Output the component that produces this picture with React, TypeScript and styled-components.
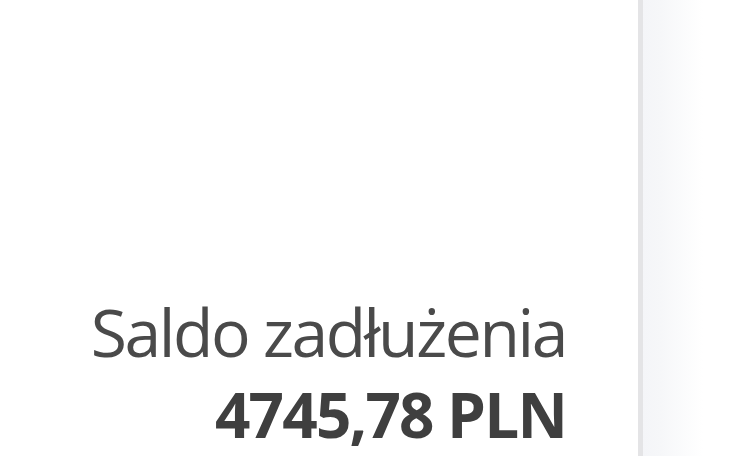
import styled, { createGlobalStyle } from 'styled-components';

const GlobalStyle = createGlobalStyle`
  html, body {
    margin: 0;
    padding: 0;
    background: #ffffff;
  }
  body {
    font-family: 'Open Sans', 'Noto Sans', sans-serif;
  }
`;

const Page = styled.div`
  display: flex;
  height: 456px;
  width: 730px;
  overflow: hidden;
`;

const MainPanel = styled.main`
  flex: 0 0 638px;
  display: flex;
  flex-direction: column;
  justify-content: flex-end;
  align-items: flex-end;
  padding: 0 72px 1px 0;
  box-sizing: border-box;
  background: #ffffff;
`;

const SidePanel = styled.aside`
  flex: 1;
  border-left: 5px solid #e4e4e6;
  background: linear-gradient(to right, #f4f5f8 0px, #f6f7f9 18px, #ffffff 60px);
`;

const BalanceLabel = styled.div`
  font-size: 66px;
  line-height: 81px;
  font-weight: 400;
  letter-spacing: -2.4px;
  color: #4a4a4a;
  white-space: nowrap;
`;

const BalanceAmount = styled.div<{ $bold?: boolean }>`
  margin-top: 2px;
  font-size: 62px;
  line-height: 81px;
  font-weight: ${({ $bold }) => ($bold ? 700 : 400)};
  letter-spacing: -1.8px;
  color: #3f3f3f;
  white-space: nowrap;
`;

export default function App() {
  return (
    <>
      <GlobalStyle />
      <Page>
        <MainPanel>
          <BalanceLabel>Saldo zadłużenia</BalanceLabel>
          <BalanceAmount $bold>4745,78 PLN</BalanceAmount>
        </MainPanel>
        <SidePanel />
      </Page>
    </>
  );
}
